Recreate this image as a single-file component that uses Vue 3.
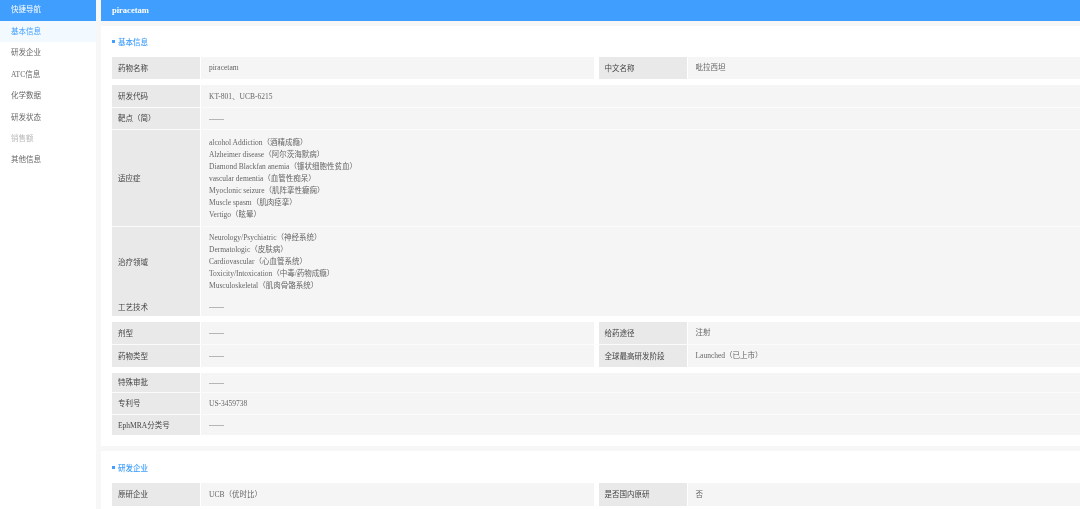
<script setup>
const nav = ['基本信息', '研发企业', 'ATC信息', '化学数据', '研发状态', '销售额', '其他信息']
const dash = '——'
const groups = [
  { cols: 2, cells: [{ h: 22, items: [['药物名称', ['piracetam']], ['中文名称', ['吡拉西坦']]] }] },
  {
    cols: 1,
    cells: [
      { h: 23, nudge: 'down', items: [['研发代码', ['KT-801、UCB-6215']]] },
      { h: 22, items: [['靶点（简）', [dash]]] },
      { h: 97, nudge: 'down', items: [['适应症', ['alcohol Addiction（酒精成瘾）', 'Alzheimer disease（阿尔茨海默病）', 'Diamond Blackfan anemia（镰状细胞性贫血）', 'vascular dementia（血管性痴呆）', 'Myoclonic seizure（肌阵挛性癫痫）', 'Muscle spasm（肌肉痉挛）', 'Vertigo（眩晕）']]] },
      { h: 71, flat: true, nudge: 'up', items: [['治疗领域', ['Neurology/Psychiatric（神经系统）', 'Dermatologic（皮肤病）', 'Cardiovascular（心血管系统）', 'Toxicity/Intoxication（中毒/药物成瘾）', 'Musculoskeletal（肌肉骨骼系统）']]] },
      { h: 18, items: [['工艺技术', [dash]]] },
    ],
  },
  {
    cols: 2,
    cells: [
      { h: 23, items: [['剂型', [dash]], ['给药途径', ['注射']]] },
      { h: 22, items: [['药物类型', [dash]], ['全球最高研发阶段', ['Launched（已上市）']]] },
    ],
  },
  {
    cols: 1,
    cells: [
      { h: 20, items: [['特殊审批', [dash]]] },
      { h: 22, items: [['专利号', ['US-3459738']]] },
      { h: 20, items: [['EphMRA分类号', [dash]]] },
    ],
  },
]
const company = [['原研企业', ['UCB（优时比）']], ['是否国内原研', ['否']]]
</script>

<template>
  <div class="page">
    <aside class="side">
      <div class="side-head">快捷导航</div>
      <div
        v-for="(n, i) in nav"
        :key="n"
        class="side-item"
        :class="{ active: i === 0, muted: n === '销售额' }"
      >{{ n }}</div>
    </aside>
    <main class="main">
      <header class="top">piracetam</header>
      <section class="card first">
        <h2 class="title">基本信息</h2>
        <div v-for="(g, gi) in groups" :key="gi" class="group">
          <div
            v-for="(r, ri) in g.cells"
            :key="ri"
            class="row"
            :class="[{ flat: r.flat }, r.nudge && 'nudge-' + r.nudge]"
            :style="{ height: r.h + 'px' }"
          >
            <div v-for="it in r.items" :key="it[0]" class="pair">
              <div class="label">{{ it[0] }}</div>
              <div class="value">
                <div v-for="l in it[1]" :key="l" class="line">{{ l }}</div>
              </div>
            </div>
          </div>
        </div>
      </section>
      <section class="card second">
        <h2 class="title">研发企业</h2>
        <div class="group">
          <div class="row company">
            <div v-for="it in company" :key="it[0]" class="pair">
              <div class="label">{{ it[0] }}</div>
              <div class="value"><div class="line">{{ it[1][0] }}</div></div>
            </div>
          </div>
        </div>
      </section>
    </main>
  </div>
</template>

<style>
html, body { margin: 0; background: #f7f7f7; overflow: hidden; }
</style>

<style scoped>
.page {
  display: flex;
  height: 509px;
  width: 1080px;
  overflow: hidden;
  background: #f7f7f7;
  font-family: "Liberation Serif", "Noto Sans CJK SC", serif;
  font-size: 7.5px;
  color: #555;
  filter: blur(0.45px);
}
.side { width: 96px; background: #fff; flex: none; }
.side-head {
  height: 21px;
  line-height: 19px;
  padding-left: 11px;
  background: #409eff;
  color: #fff;
}
.side-item { height: 21.4px; line-height: 21.4px; padding-left: 11px; color: #666; }
.side-item.active { background: #f2f9ff; color: #409eff; }
.side-item.muted { color: #bbb; }
.main { margin-left: 5px; flex: 1; min-width: 0; }
.top {
  height: 21px;
  line-height: 20px;
  padding-left: 11px;
  background: #409eff;
  color: #fff;
  font-weight: 700;
  font-size: 8.5px;
}
.card { background: #fff; padding-left: 11px; }
.first { margin-top: 5px; height: 420px; padding-top: 1px; box-sizing: border-box; }
.second { margin-top: 5px; height: 60px; }
.title {
  display: flex;
  align-items: center;
  gap: 3px;
  margin: 0;
  font-size: 7.5px;
  font-weight: 500;
  color: #409eff;
}
.title::before { content: ""; width: 3px; height: 3px; background: #409eff; }
.first .title { height: 30px; padding-bottom: 1px; box-sizing: border-box; }
.second .title { height: 32px; }
.group { margin-bottom: 6px; }
.row { display: flex; gap: 5px; box-sizing: border-box; border-bottom: 1px solid #fbfbfb; }
.row:last-child, .row.flat { border-bottom: 0; }
.company { height: 23px; }
.pair { flex: 1 1 0; display: flex; min-width: 0; }
.label {
  width: 88px;
  flex: none;
  margin-right: 1px;
  background: #e9e9e9;
  padding: 0 0 2px 6px;
  box-sizing: border-box;
  display: flex;
  align-items: center;
  color: #444;
}
.value {
  flex: 1;
  min-width: 0;
  background: #f5f5f5;
  padding-left: 8px;
  display: flex;
  flex-direction: column;
  justify-content: center;
  color: #666;
}
.nudge-down .value { padding-top: 2px; }
.nudge-up .value { padding-bottom: 2px; }
.line { line-height: 12px; white-space: nowrap; }
</style>
